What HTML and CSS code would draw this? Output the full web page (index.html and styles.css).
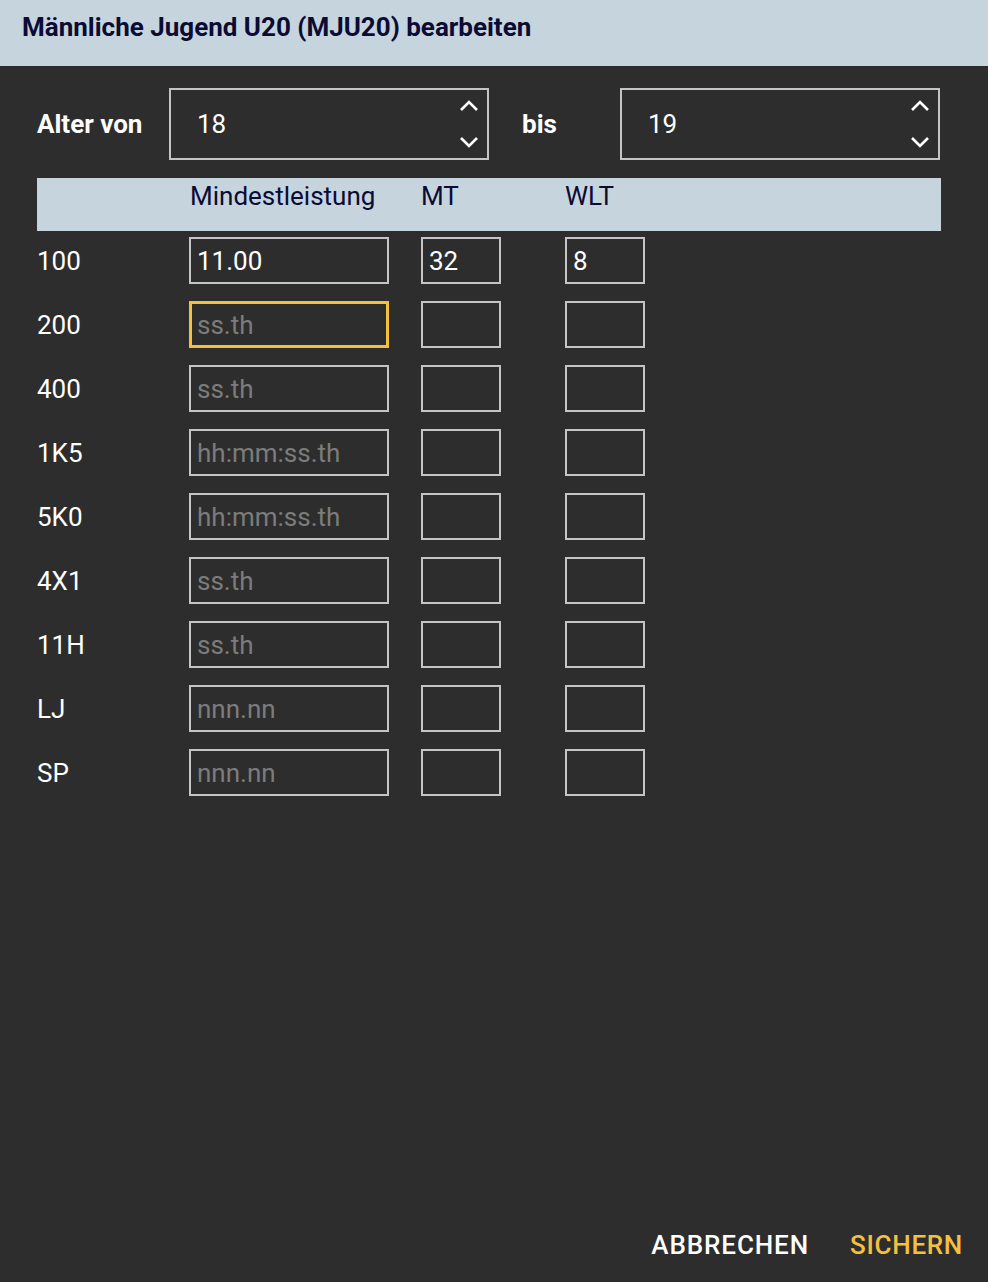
FILE: index.html
```html
<!DOCTYPE html>
<html lang="de">
<head>
  <meta charset="UTF-8" />
  <meta name="viewport" content="width=device-width, initial-scale=1.0" />
  <title>Altersklasse bearbeiten</title>
  <link rel="stylesheet" href="styles.css">
</head>
<body>
  <div class="dialog">
    <header class="title-bar">Männliche Jugend U20 (MJU20) bearbeiten</header>

    <main class="content">
      <div class="age-row">
        <label class="age-label" for="ageFrom">Alter von</label>
        <div class="spin-box">
          <input type="number" id="ageFrom" value="18" />
          <div class="spin-buttons">
            <svg width="20" height="12" viewBox="0 0 20 12"><path d="M2 10 L10 2 L18 10" fill="none" stroke="#fff" stroke-width="2.6"/></svg>
            <svg width="20" height="12" viewBox="0 0 20 12"><path d="M2 2 L10 10 L18 2" fill="none" stroke="#fff" stroke-width="2.6"/></svg>
          </div>
        </div>
        <label class="age-label bis" for="ageTo">bis</label>
        <div class="spin-box">
          <input type="number" id="ageTo" value="19" />
          <div class="spin-buttons">
            <svg width="20" height="12" viewBox="0 0 20 12"><path d="M2 10 L10 2 L18 10" fill="none" stroke="#fff" stroke-width="2.6"/></svg>
            <svg width="20" height="12" viewBox="0 0 20 12"><path d="M2 2 L10 10 L18 2" fill="none" stroke="#fff" stroke-width="2.6"/></svg>
          </div>
        </div>
      </div>

      <div class="limits">
        <div class="limits-head">
          <span></span>
          <span>Mindestleistung</span>
          <span>MT</span>
          <span>WLT</span>
        </div>

        <div class="limit-row">
          <span class="disc">100</span>
          <input class="perf" type="text" value="11.00" placeholder="ss.th" />
          <input class="small" type="text" value="32" />
          <input class="small" type="text" value="8" />
        </div>
        <div class="limit-row">
          <span class="disc">200</span>
          <input class="perf focused" type="text" placeholder="ss.th" autofocus />
          <input class="small" type="text" />
          <input class="small" type="text" />
        </div>
        <div class="limit-row">
          <span class="disc">400</span>
          <input class="perf" type="text" placeholder="ss.th" />
          <input class="small" type="text" />
          <input class="small" type="text" />
        </div>
        <div class="limit-row">
          <span class="disc">1K5</span>
          <input class="perf" type="text" placeholder="hh:mm:ss.th" />
          <input class="small" type="text" />
          <input class="small" type="text" />
        </div>
        <div class="limit-row">
          <span class="disc">5K0</span>
          <input class="perf" type="text" placeholder="hh:mm:ss.th" />
          <input class="small" type="text" />
          <input class="small" type="text" />
        </div>
        <div class="limit-row">
          <span class="disc">4X1</span>
          <input class="perf" type="text" placeholder="ss.th" />
          <input class="small" type="text" />
          <input class="small" type="text" />
        </div>
        <div class="limit-row">
          <span class="disc">11H</span>
          <input class="perf" type="text" placeholder="ss.th" />
          <input class="small" type="text" />
          <input class="small" type="text" />
        </div>
        <div class="limit-row">
          <span class="disc">LJ</span>
          <input class="perf" type="text" placeholder="nnn.nn" />
          <input class="small" type="text" />
          <input class="small" type="text" />
        </div>
        <div class="limit-row">
          <span class="disc">SP</span>
          <input class="perf" type="text" placeholder="nnn.nn" />
          <input class="small" type="text" />
          <input class="small" type="text" />
        </div>
      </div>
    </main>

    <footer class="actions">
      <button type="button" class="btn">Abbrechen</button>
      <button type="submit" class="btn primary">Sichern</button>
    </footer>
  </div>
</body>
</html>
```

FILE: styles.css
```css
* { box-sizing: border-box; }

body {
  margin: 0;
  background-color: #2d2d2d;
  color: #ffffff;
  font-family: Roboto, "Noto Sans", sans-serif;
}

.dialog {
  display: flex;
  flex-direction: column;
  height: 100vh;
}

.title-bar {
  height: 66px;
  padding: 11px 22px 0;
  background-color: #c6d4de;
  color: #0b0b33;
  font-size: 26px;
  font-weight: 700;
  line-height: 32px;
}

.content {
  flex: 1;
  padding: 22px 47px 0 37px;
}

.age-row {
  display: flex;
  align-items: center;
  height: 72px;
}

.age-label {
  font-size: 26px;
  font-weight: 700;
  width: 132px;
}

.age-label.bis {
  width: 98px;
  padding-left: 33px;
  box-sizing: content-box;
}

.spin-box {
  display: flex;
  align-items: center;
  width: 320px;
  height: 72px;
  border: 2px solid #c4c4c4;
  padding: 0 8px 0 26px;
}

.spin-box input {
  flex: 1;
  min-width: 0;
  background: none;
  border: none;
  outline: none;
  color: #ffffff;
  font-family: inherit;
  font-size: 26px;
  padding: 0;
  -moz-appearance: textfield;
}

.spin-box input::-webkit-inner-spin-button,
.spin-box input::-webkit-outer-spin-button {
  -webkit-appearance: none;
  margin: 0;
}

.spin-buttons {
  display: flex;
  flex-direction: column;
  gap: 24px;
}

.spin-buttons svg {
  display: block;
}

.limits {
  margin-top: 18px;
  width: 904px;
}

.limits-head,
.limit-row {
  display: grid;
  grid-template-columns: 152px 232px 144px 80px;
  align-items: center;
}

.limits-head {
  height: 53px;
  align-items: start;
  padding-top: 3px;
  background-color: #c6d4de;
  color: #0b0b33;
  font-size: 26px;
  line-height: 30px;
}

.limits-head span:nth-child(2) {
  padding-left: 1px;
}

.limit-row {
  margin-top: 6px;
  height: 47px;
}

.limit-row + .limit-row {
  margin-top: 17px;
}

.disc {
  font-size: 26px;
}

.limit-row input {
  height: 47px;
  background: none;
  border: 2px solid #c4c4c4;
  color: #ffffff;
  font-family: inherit;
  font-size: 26px;
  padding: 0 6px;
  outline: none;
  caret-color: #ffffff;
}

.limit-row input::placeholder {
  color: #7c7c7c;
}

.limit-row .perf { width: 200px; }
.limit-row .small { width: 80px; }

.limit-row input.focused {
  border: 3px solid #f4c13f;
  padding-left: 5px;
}

.actions {
  display: flex;
  justify-content: flex-end;
  gap: 27px;
  padding: 0 17px 14px 0;
}

.btn {
  background: none;
  border: none;
  padding: 8px;
  color: #ffffff;
  font-family: inherit;
  font-size: 26px;
  font-weight: 500;
  letter-spacing: 0.9px;
  text-transform: uppercase;
  cursor: pointer;
}

.btn.primary {
  color: #f4c13f;
  margin-left: -2px;
  letter-spacing: 0.7px;
}
```
